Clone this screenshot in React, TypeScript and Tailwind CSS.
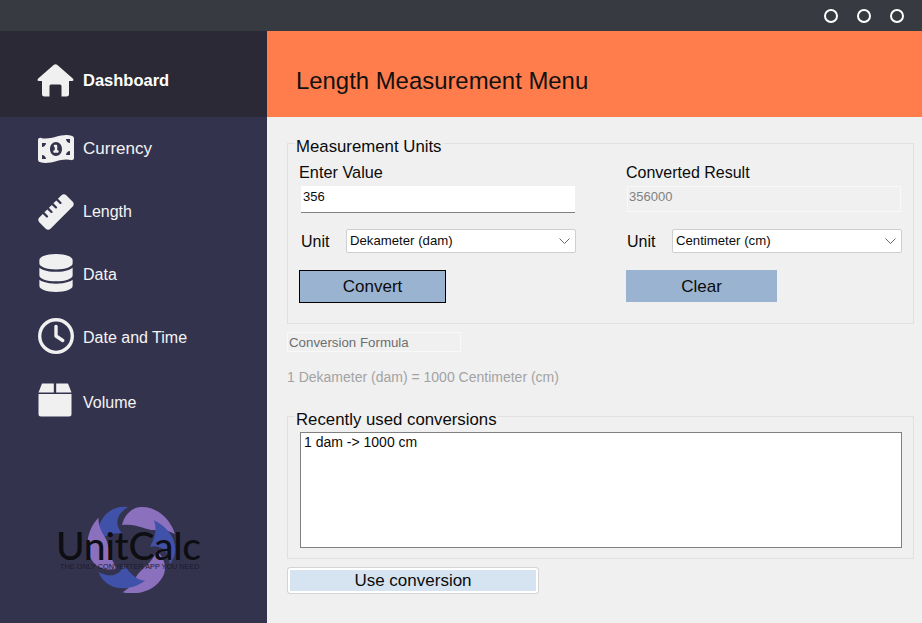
import React from "react";
import { FaMoneyBill1Wave, FaRuler, FaDatabase, FaRegClock } from "react-icons/fa6";

function HomeIcon() {
  return (
    <svg viewBox="0 0 37 33" className="h-[33px] w-[37px]" fill="#f0f0f0">
      <path d="M16.6 1 Q18.5 -0.4 20.4 1 L35.8 14.4 Q37.6 17 35 17 L32 17 L32 30 Q32 32.5 29.5 32.5 L24.5 32.5 L24.5 22 Q24.5 20.5 23 20.5 L14 20.5 Q12.5 20.5 12.5 22 L12.5 32.5 L7.5 32.5 Q5 32.5 5 30 L5 17 L2 17 Q-0.6 17 1.2 14.4 Z" />
    </svg>
  );
}

function BoxIcon() {
  return (
    <svg viewBox="0 0 34 34" className="h-[34px] w-[34px]" fill="#f0f0f0">
      <path d="M4 0.5 L15.8 0.5 L15.8 9.5 L0.5 9.5 Z" />
      <path d="M18.2 0.5 L30 0.5 L33.5 9.5 L18.2 9.5 Z" />
      <path d="M0.5 11 L33.5 11 L33.5 31 Q33.5 33.5 31 33.5 L3 33.5 Q0.5 33.5 0.5 31 Z" />
    </svg>
  );
}

const nav = [
  { label: "Currency", icon: <FaMoneyBill1Wave className="h-[36px] w-[36px]" />, h: "h-[63px]", t: "text-[17px]" },
  { label: "Length", icon: <FaRuler className="h-[36px] w-[36px]" />, h: "h-[63px]", t: "text-[16px]" },
  { label: "Data", icon: <FaDatabase className="mb-[4px] h-[38px] w-[34px]" />, h: "h-[63px]", t: "text-[16px]" },
  { label: "Date and Time", icon: <FaRegClock className="mb-[3px] h-[36px] w-[36px]" />, h: "h-[63px]", t: "text-[16px]" },
  { label: "Volume", icon: <div className="mb-[4px] mr-[1px]"><BoxIcon /></div>, h: "h-[66px]", t: "pt-[2px] text-[16px]" },
];

const blue = "M-4 -41 C -22 -44 -37 -28 -35 -5 C -30 -12 -20 -15 -10 -15 C -17 -22 -17 -33 -4 -41Z";
const purple = "M-10 -23 C -8 -32 -1 -41 10 -41 C 26 -41 39 -28 43 -14 C 34 -19 28 -18 22 -18 C 14 -18 4 -25 -10 -23Z";

function Logo() {
  return (
    <div className="relative mb-[30px] ml-[58px] h-[90px] w-[146px]">
      <svg viewBox="-45 -45 90 90" className="absolute left-[29px] top-0 h-[90px] w-[90px] blur-[0.5px]">
        {[0, 120, 240].map((r) => (
          <g key={r} transform={`rotate(${r})`}>
            <path d={blue} fill="#3f51a8" />
            <path d={purple} fill="#8a70bd" />
          </g>
        ))}
      </svg>
      <div className="absolute left-[-2px] top-[27px] font-['Lato',sans-serif] text-[39px] font-medium leading-[30px] text-[#0d0d12] tracking-[-0.3px]">UnitCalc</div>
      <div className="absolute left-[2px] top-[59px] whitespace-nowrap font-['Liberation_Sans',sans-serif] text-[7.3px] leading-[10px] text-[#1b1b30]">THE ONLY CONVERTER APP YOU NEED</div>
    </div>
  );
}

function Chevron() {
  return (
    <svg width="11" height="6" viewBox="0 0 11 6" className="mr-[5px]" fill="none" stroke="#666" strokeWidth="1">
      <path d="M0.5 0.5 L5.5 5.5 L10.5 0.5" />
    </svg>
  );
}

function Select({ value, w }: { value: string; w: string }) {
  return (
    <div className={`flex h-[24px] ${w} items-center justify-between rounded-[2px] border border-[#cfcfcf] bg-white pl-[3px] text-[13.2px]`}>
      <span>{value}</span>
      <Chevron />
    </div>
  );
}

export default function App() {
  return (
    <div className="flex h-[623px] w-[922px] flex-col overflow-hidden bg-[#f0f0f0] font-['Liberation_Sans',sans-serif] text-[#0b0b0b]">
      <div className="flex h-[31px] items-center justify-end gap-[19px] bg-[#373a40] pr-[18px]">
        <span className="h-[14px] w-[14px] rounded-full border-2 border-white" />
        <span className="h-[14px] w-[14px] rounded-full border-2 border-white" />
        <span className="h-[14px] w-[14px] rounded-full border-2 border-white" />
      </div>
      <div className="flex flex-1">
        <aside className="flex w-[267px] flex-col bg-[#34334e] text-[#f4f4f4]">
          <div className="flex h-[86px] items-center bg-[#2a2935] pl-[37px] pt-[13px]">
            <span className="mr-[9px] flex w-[37px] justify-center">
              <HomeIcon />
            </span>
            <span className="text-[16.5px] font-bold text-white">Dashboard</span>
          </div>
          {nav.map(({ label, icon, h, t }) => (
            <div key={label} className={`flex ${h} items-center pl-[37px]`}>
              <span className="mr-[9px] flex w-[37px] justify-center text-[#f0f0f0]">{icon}</span>
              <span className={t}>{label}</span>
            </div>
          ))}
          <div className="mt-auto">
            <Logo />
          </div>
        </aside>
        <main className="flex flex-1 flex-col">
          <header className="flex h-[86px] items-center bg-[#ff7d4d] pl-[29px] pt-[14px] text-[23.9px] text-[#111]">Length Measurement Menu</header>
          <fieldset className="ml-[20px] mr-[8px] mt-[19px] h-[188px] border border-[#e0e0e0] pl-[11px]">
            <legend className="ml-[-4px] h-[14px] px-[1px] text-[16.8px] leading-[22px]">Measurement Units</legend>
            <div className="grid grid-cols-[327px_276px] pt-[12px]">
              <div>
                <div className="text-[16.3px] leading-[20px]">Enter Value</div>
                <div className="ml-[2px] mt-[4px] flex h-[27px] w-[274px] items-start border-b border-[#808080] bg-white pl-[2px] pt-[2px] text-[13px] leading-[18px]">356</div>
                <div className="mt-[15px] flex items-center">
                  <span className="ml-[2px] w-[45px] pt-[2px] text-[16px]">Unit</span>
                  <Select value="Dekameter (dam)" w="w-[230px]" />
                </div>
                <button className="mt-[16px] block h-[33px] w-[147px] border border-black bg-[#9ab3d1] text-[17px]">Convert</button>
              </div>
              <div>
                <div className="pt-[1px] text-[16px] leading-[20px]">Converted Result</div>
                <div className="ml-[1px] mt-[3px] flex h-[26px] w-[274px] items-start border border-[#f8f8f8] bg-[#f0f0f0] pl-[1px] pt-[1px] text-[13px] leading-[18px] text-[#808080]">356000</div>
                <div className="mt-[16px] flex items-center">
                  <span className="ml-[1px] w-[45px] pt-[2px] text-[16px]">Unit</span>
                  <Select value="Centimeter (cm)" w="w-[230px]" />
                </div>
                <button className="mt-[16px] block h-[32px] w-[151px] bg-[#9ab3d1] pt-[1px] text-[17px]">Clear</button>
              </div>
            </div>
          </fieldset>
          <div className="ml-[20px] mt-[8px] h-[20px] w-[174px] border border-[#f8f8f8] pl-[1px] text-[13.3px] leading-[19px] text-[#6e6e6e]">Conversion Formula</div>
          <div className="ml-[20px] mt-[16px] text-[14px] leading-[18px] text-[#a3a3a3]">1 Dekameter (dam) = 1000 Centimeter (cm)</div>
          <fieldset className="ml-[20px] mr-[8px] mt-[23px] h-[150px] border border-[#e0e0e0] pl-[12px]">
            <legend className="ml-[-5px] h-[14px] px-[1px] text-[16.8px] leading-[22px]">Recently used conversions</legend>
            <div className="mt-[9px] h-[116px] w-[602px] border border-[#808080] bg-white pl-[3px] text-[14px] leading-[18px]">1 dam -&gt; 1000 cm</div>
          </fieldset>
          <button className="ml-[20px] mt-[8px] h-[27px] w-[252px] rounded-[3px] border border-[#d4d4d4] bg-[#d6e4f2] text-[17px] shadow-[inset_0_0_0_2px_#ffffff]">Use conversion</button>
        </main>
      </div>
    </div>
  );
}
